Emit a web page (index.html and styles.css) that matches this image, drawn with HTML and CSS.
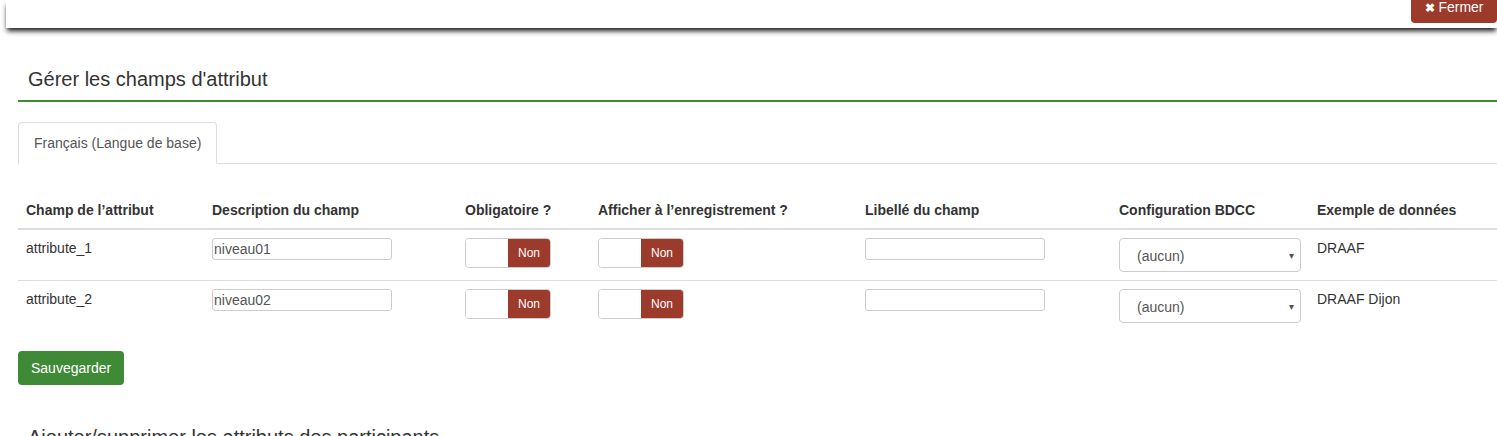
FILE: index.html
```html
<!DOCTYPE html>
<html lang="fr">
<head>
<meta charset="utf-8">
<title>Gérer les champs d'attribut</title>
<link rel="stylesheet" href="styles.css">
</head>
<body>
<div class="topbar">
  <button class="btn-close"><span class="x">&#10006;</span> Fermer</button>
</div>
<main class="page">
  <h3 class="section-title">Gérer les champs d'attribut</h3>
  <ul class="tabs">
    <li class="tab active">Français (Langue de base)</li>
  </ul>
  <table class="attr-table">
    <thead>
      <tr>
        <th class="c1">Champ de l’attribut</th>
        <th class="c2">Description du champ</th>
        <th class="c3">Obligatoire ?</th>
        <th class="c4">Afficher à l’enregistrement ?</th>
        <th class="c5">Libellé du champ</th>
        <th class="c6">Configuration BDCC</th>
        <th class="c7">Exemple de données</th>
      </tr>
    </thead>
    <tbody>
      <tr>
        <td>attribute_1</td>
        <td><input class="text-input" type="text" value="niveau01"></td>
        <td><div class="switch"><span class="sw-off"></span><span class="sw-on">Non</span></div></td>
        <td><div class="switch"><span class="sw-off"></span><span class="sw-on">Non</span></div></td>
        <td><input class="text-input" type="text" value=""></td>
        <td><div class="select"><span>(aucun)</span><span class="caret">&#9662;</span></div></td>
        <td>DRAAF</td>
      </tr>
      <tr>
        <td>attribute_2</td>
        <td><input class="text-input" type="text" value="niveau02"></td>
        <td><div class="switch"><span class="sw-off"></span><span class="sw-on">Non</span></div></td>
        <td><div class="switch"><span class="sw-off"></span><span class="sw-on">Non</span></div></td>
        <td><input class="text-input" type="text" value=""></td>
        <td><div class="select"><span>(aucun)</span><span class="caret">&#9662;</span></div></td>
        <td>DRAAF Dijon</td>
      </tr>
    </tbody>
  </table>
  <button class="btn-save">Sauvegarder</button>
  <h3 class="section-title next">Ajouter/supprimer les attributs des participants</h3>
</main>
</body>
</html>
```
FILE: styles.css
```css
* { box-sizing: border-box; }
html, body { margin: 0; padding: 0; background: #fff; }
body {
  font-family: "Liberation Sans", Arial, sans-serif;
  font-size: 14px;
  color: #333;
  overflow: hidden;
  height: 436px;
}
.topbar {
  height: 28px;
  margin-left: 6px;
  background: #fff;
  box-shadow: 0 4px 5px -1px rgba(0, 0, 0, 0.9);
  display: flex;
  justify-content: flex-end;
  position: relative;
  z-index: 2;
}
.btn-close {
  height: 23px;
  width: 86px;
  border: none;
  background: #9c3a2b;
  color: #fff;
  font-family: "Liberation Sans", Arial, sans-serif;
  font-size: 14px;
  line-height: 14px;
  border-radius: 0 0 4px 4px;
  padding: 0 0 8px 0;
  margin: 0;
  cursor: pointer;
}
.btn-close .x { font-size: 12px; font-weight: bold; }
.page {
  padding: 0 0 0 18px;
}
.section-title {
  margin: 40px 0 0 0;
  padding: 0 0 10px 10px;
  font-size: 20px;
  font-weight: normal;
  line-height: 22px;
  color: #333;
  border-bottom: 2px solid #3f8a36;
}
.section-title.next {
  border-bottom: none;
  margin-top: 41px;
}
.tabs {
  list-style: none;
  margin: 20px 0 0 0;
  padding: 0;
  border-bottom: 1px solid #ddd;
  display: flex;
  height: 42px;
}
.tab {
  border: 1px solid #ddd;
  border-bottom-color: #fff;
  border-radius: 4px 4px 0 0;
  padding: 0 15px;
  line-height: 40px;
  height: 42px;
  color: #555;
  background: #fff;
}
.attr-table {
  margin-top: 28px;
  width: 100%;
  border-collapse: collapse;
  table-layout: fixed;
}
.attr-table th, .attr-table td {
  padding: 8px;
  line-height: 20px;
  text-align: left;
  vertical-align: top;
}
.attr-table th {
  font-weight: bold;
  border-bottom: 2px solid #ddd;
}
.attr-table tbody tr + tr td { border-top: 1px solid #ddd; }
.attr-table td { height: 50px; }
.c1 { width: 186px; }
.c2 { width: 253px; }
.c3 { width: 133px; }
.c4 { width: 267px; }
.c5 { width: 254px; }
.c6 { width: 198px; }
.text-input {
  display: block;
  width: 180px;
  height: 22px;
  border: 1px solid #ccc;
  border-radius: 3px;
  padding: 0 1px;
  font-family: "Liberation Sans", Arial, sans-serif;
  font-size: 14px;
  color: #555;
  background: #fff;
  margin: 0;
}
.switch {
  display: flex;
  width: 86px;
  height: 30px;
  border: 1px solid #ccc;
  border-radius: 4px;
  overflow: hidden;
}
.sw-off { width: 42px; background: #fff; }
.sw-on {
  flex: 1;
  background: #9c3a2b;
  color: #fff;
  font-size: 12px;
  display: flex;
  align-items: center;
  justify-content: center;
}
.select {
  width: 182px;
  height: 34px;
  border: 1px solid #ccc;
  border-radius: 4px;
  display: flex;
  align-items: center;
  justify-content: space-between;
  padding: 2px 6px 0 17px;
  color: #555;
  font-size: 14px;
}
.select .caret { font-size: 10px; color: #555; }
.btn-save {
  margin-top: 20px;
  height: 34px;
  padding: 0 13px;
  background: #3f8a36;
  color: #fff;
  border: none;
  border-radius: 4px;
  font-family: "Liberation Sans", Arial, sans-serif;
  font-size: 14px;
}
```
